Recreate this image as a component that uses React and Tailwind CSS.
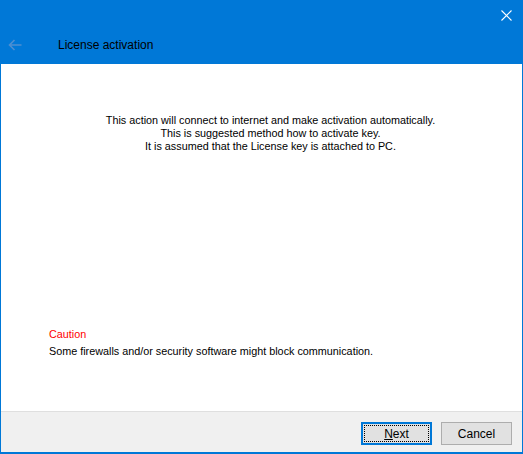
import React from "react";

const font = { fontFamily: '"Liberation Sans", Arial, sans-serif' };

const App = () => {
  return (
    <div
      className="w-[523px] h-[454px] flex flex-col bg-white border-x border-b-2 border-[#0078d7] text-black"
      style={font}
    >
      <div className="h-[64px] bg-[#0078d7] flex flex-col shrink-0">
        <div className="h-[31px] flex justify-end items-center pr-[10px]">
          <svg width="11" height="11" viewBox="0 0 11 11">
            <path d="M0.5 0.5 L10.5 10.5 M10.5 0.5 L0.5 10.5" stroke="#ffffff" strokeWidth="1.1" fill="none" />
          </svg>
        </div>
        <div className="h-[28px] flex items-center pl-[7px]">
          <svg width="14" height="12" viewBox="0 0 14 12" className="shrink-0">
            <path d="M13.5 6 H1.5 M6.5 1 L1.5 6 L6.5 11" stroke="#4d8fd1" strokeWidth="1.6" fill="none" />
          </svg>
          <span className="ml-[36px] text-[12px] leading-[16px]">License activation</span>
        </div>
      </div>

      <div className="flex-1 flex flex-col">
        <div className="pt-[50px] pl-[18px] text-center text-[10.8px] leading-[13px]">
          <p>This action will connect to internet and make activation automatically.</p>
          <p>This is suggested method how to activate key.</p>
          <p>It is assumed that the License key is attached to PC.</p>
        </div>
        <div className="mt-auto pb-[53px] pl-[48px] text-[10.8px] leading-[13px]">
          <p className="text-[#ff0000]">Caution</p>
          <p className="mt-[4px]">Some firewalls and/or security software might block communication.</p>
        </div>
      </div>

      <div className="h-[41px] shrink-0 bg-[#f0f0f0] border-t border-[#dfdfdf] flex justify-end items-start pt-[10px] pr-[10px] gap-[9px]">
        <button className="w-[71px] h-[23px] border-2 border-[#0078d7] bg-[#e1e1e1] p-[1px] flex">
          <span className="flex-1 border border-dotted border-black flex items-center justify-center text-[12px] leading-none">
            <span><span className="underline">N</span>ext</span>
          </span>
        </button>
        <button className="w-[71px] h-[23px] border border-[#adadad] bg-[#e1e1e1] flex items-center justify-center text-[12px] leading-none">
          Cancel
        </button>
      </div>
    </div>
  );
};

export default App;
